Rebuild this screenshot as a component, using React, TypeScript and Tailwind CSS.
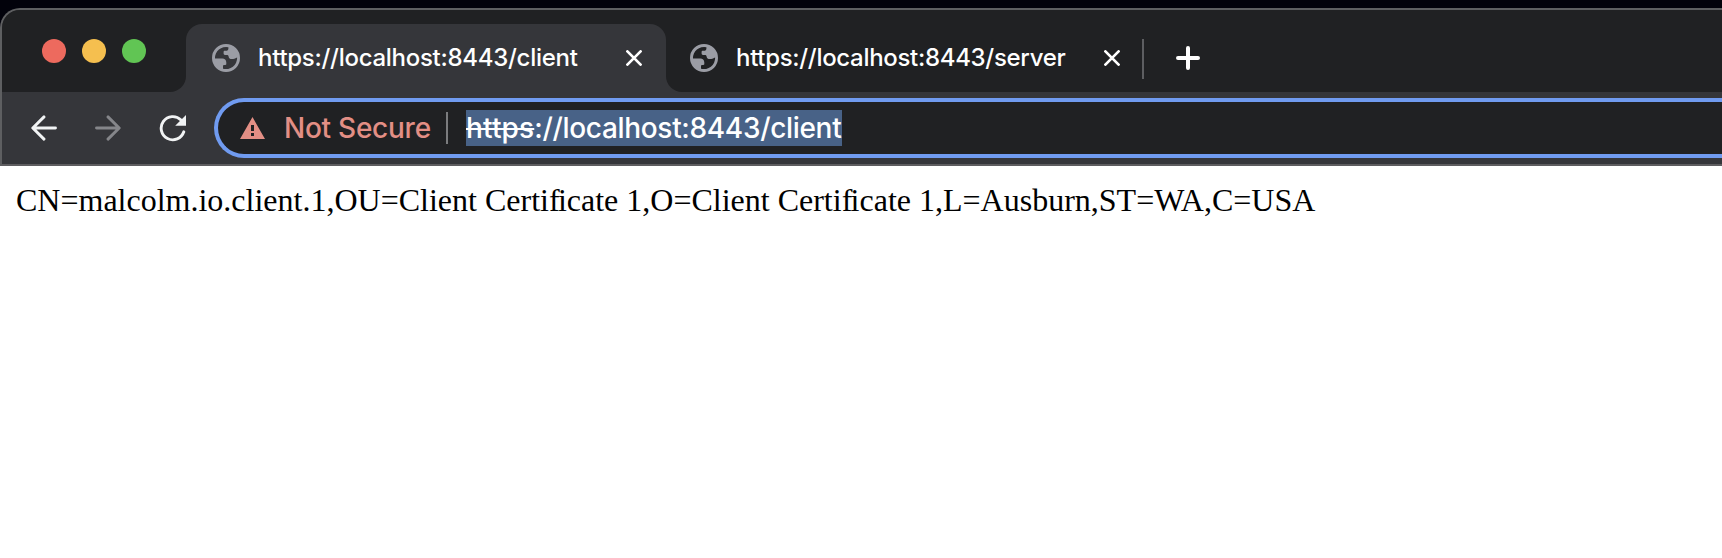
type IconProps = { className?: string };

function Globe({ className = "" }: IconProps) {
  return (
    <svg className={className} width="28" height="28" viewBox="0 0 28 28" fill="#9b9da5">
      <path
        fillRule="evenodd"
        d="M14 0a14 14 0 1 0 0 28a14 14 0 0 0 0-28ZM16.400 3.200V4.400C16.400 5.800 15.400 6.800 14 6.800H12.800C12 6.800 11.600 7.200 11.600 8V9.600C11.600 10.400 12.200 10.900 13 10.900H15C16 10.900 16.400 11.400 16.600 12.400C16.900 14.200 18 15 19.600 15H21.200C22.600 15 23.400 14.400 25.100 13.600A11.100 11.100 0 0 1 11 24.700V22.200C11 21.300 11.500 20.900 12.200 20.900H13.400C14 20.900 14.300 20.500 14.300 19.700V18.400C14.300 16.200 12.600 14.500 10.400 14.500H3A11.100 11.100 0 0 1 16.400 3.200Z"
      />
    </svg>
  );
}

function Close({ className = "" }: IconProps) {
  return (
    <svg className={className} width="16" height="16" viewBox="0 0 16 16" stroke="#fff" strokeWidth="2.700" strokeLinecap="round">
      <path d="M1.400 1.400l13.200 13.200M14.600 1.400L1.400 14.600" />
    </svg>
  );
}

function Arrow({ className = "" }: IconProps) {
  return (
    <svg className={className} width="26" height="26" viewBox="0 0 26 26" fill="none" stroke="currentColor" strokeWidth="2.900" strokeLinecap="round" strokeLinejoin="round">
      <path d="M24.500 13H2M13 1.900L1.800 13l11.200 11.100" />
    </svg>
  );
}

function Reload() {
  return (
    <svg width="28" height="28" viewBox="0 0 28 28" fill="none">
      <path d="M24.800 17.800A11.600 11.600 0 1 1 22 6" stroke="#f1f3f4" strokeWidth="2.900" strokeLinecap="round" />
      <path d="M27 1v10.800H16.200Z" fill="#f1f3f4" />
    </svg>
  );
}

function Warning() {
  return (
    <svg width="26" height="22" viewBox="0 0 26 22" fill="#e38f85">
      <path fillRule="evenodd" d="M12.500 0L25 22H0ZM11 8v6h3V8ZM11 16v3h3v-3Z" />
    </svg>
  );
}

function Certificate() {
  return (
    <>
      Certi<span className="tracking-[-1.7px]">f</span>icate
    </>
  );
}

export default function App() {
  return (
    <div className="flex h-[558px] w-full flex-col overflow-hidden bg-[#02020b] pt-2 font-['Inter',sans-serif]">
      <header className="flex shrink-0 flex-col overflow-hidden rounded-tl-[20px] border-t-2 border-l-2 border-[#5e5f61] bg-[#35363a]">
        <div className="flex h-[82px]">
          <div className="flex w-[184px] gap-4 rounded-br-2xl bg-[#202123] pt-[29px] pl-10">
            <span className="size-6 rounded-full bg-[#ed6a5e]" />
            <span className="size-6 rounded-full bg-[#f5bf4f]" />
            <span className="size-6 rounded-full bg-[#61c554]" />
          </div>
          <div className="w-[480px] bg-[#202123] pt-3.5">
            <div className="flex h-[68px] items-center rounded-t-2xl bg-[#35363a] pl-[26px]">
              <Globe />
              <span className="ml-[18px] w-[368px] text-2xl font-[450] tracking-[-0.28px] whitespace-nowrap text-white">https://localhost:8443/client</span>
              <Close />
            </div>
          </div>
          <div className="flex flex-1 items-center rounded-bl-2xl bg-[#202123] pt-3.5 pl-6">
            <Globe />
            <span className="ml-[18px] w-[368px] text-2xl font-[450] tracking-[-0.31px] whitespace-nowrap text-white">https://localhost:8443/server</span>
            <Close />
            <span className="mt-0.5 ml-[22px] h-10 w-0.5 bg-[#5d5e61]" />
            <svg className="ml-8" width="24" height="24" viewBox="0 0 24 24" stroke="#fff" strokeWidth="4" strokeLinecap="round">
              <path d="M12 2v20M2 12h20" />
            </svg>
          </div>
        </div>
        <div className="flex h-[74px] items-center border-b-2 border-[#5e5d60]">
          <Arrow className="ml-[29px] text-[#f1f3f4]" />
          <Arrow className="ml-[38px] rotate-180 text-[#85868a]" />
          <div className="ml-[38px] flex">
            <Reload />
          </div>
          <div className="ml-[27px] flex h-[60px] flex-1 items-center rounded-l-full border-4 border-r-0 border-[#709bf0] bg-[#202123] pl-[22px]">
            <Warning />
            <span className="ml-[18px] w-[162px] text-[28px] font-[450] tracking-[-0.25px] whitespace-nowrap text-[#e38f85]">Not Secure</span>
            <span className="h-8 w-0.5 bg-[#7b7c7e]" />
            <span className="ml-[18px] h-9 w-[376px] bg-[#486287] text-[28px]/[37px] font-[450] tracking-[-0.32px] whitespace-nowrap text-white">
              <span className="tracking-[0.15px] line-through decoration-2">https</span>://localhost:8443/client
            </span>
          </div>
        </div>
      </header>
      <main className="flex-1 bg-white px-4 py-4 font-['Liberation_Serif',serif] text-[32px]/[37px] whitespace-nowrap text-black">
        CN=malcolm.io.client.1,OU=Client <Certificate /> 1,O=Client <Certificate /> 1,L=Ausburn,ST=WA,C=USA
      </main>
    </div>
  );
}
